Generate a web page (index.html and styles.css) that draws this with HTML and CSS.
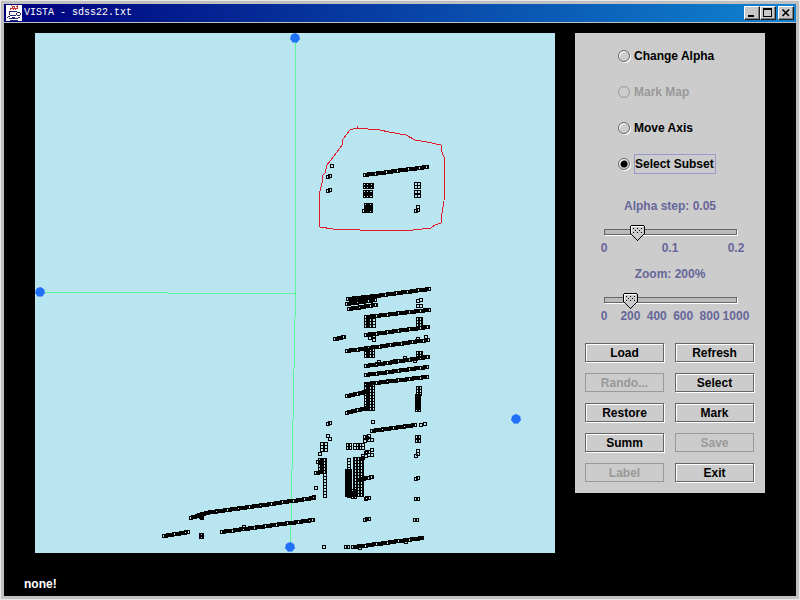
FILE: index.html
```html
<!DOCTYPE html>
<html lang="en">
<head>
<meta charset="utf-8">
<title>VISTA - sdss22.txt</title>
<link rel="stylesheet" href="styles.css">
</head>
<body>
<div class="window">
  <header class="titlebar">
    <svg class="app-icon" viewBox="0 0 16 16" aria-hidden="true" shape-rendering="crispEdges">
      <rect width="16" height="16" fill="#fff"/>
      <g fill="none" stroke="#c33">
        <path d="M4.5 5V3.5H6.5V1.5H8M7.5 5V3.5H8.5V1M9.5 5V3.5H11.5V1.5H10M5 .5H6M11 .5H12"/>
      </g>
      <g fill="none" stroke="#22226e">
        <path d="M3 6.5H11M2.5 7.5H4M11 7.5H14M3.5 8V10M10.5 8V10M14.5 8V9.5M11 10.5H14M4 10.5H10M2 11.5H4M1.5 12V13M3 13.5H12M12 12.5H14M4 15.5H12M6 12.5H9"/>
      </g>
    </svg>
    <h1 class="title">VISTA - sdss22.txt</h1>
    <div class="window-buttons">
      <button class="win-btn" type="button" aria-label="Minimize">
        <svg class="win-glyph" viewBox="0 0 12 10" shape-rendering="crispEdges"><path d="M2 8H8" stroke="#000" stroke-width="2"/></svg>
      </button>
      <button class="win-btn" type="button" aria-label="Maximize">
        <svg class="win-glyph" viewBox="0 0 12 10" shape-rendering="crispEdges"><path d="M1.5 1V8.5H9.5V1" fill="none" stroke="#000"/><path d="M1 1H10" stroke="#000" stroke-width="2"/></svg>
      </button>
      <button class="win-btn win-close" type="button" aria-label="Close">
        <svg class="win-glyph" viewBox="0 0 12 10"><path d="M2.5 1.5L9 8M9 1.5L2.5 8" stroke="#000" stroke-width="1.6"/></svg>
      </button>
    </div>
  </header>

  <main class="workspace">
    <svg class="plot" viewBox="35 33 520 520" role="img" aria-label="Star coordinates plot">
      <path class="axis" d="M295.5 38V293M40 292.5L295 293.5M295.5 293L290.5 547"/>
      <g class="handle">
        <circle cx="295" cy="38" r="4.5"/>
        <circle cx="40" cy="292" r="4.5"/>
        <circle cx="516" cy="419" r="4.5"/>
        <circle cx="290" cy="547" r="4.5"/>
      </g>
      <path class="points" id="points"/>
      <path class="lasso" d="M357 126V129M350 130L356 128L380 130L389 132L406 135L415 140L427 142L441 145L442 152L445 160L444 201L442 213L441 223L435 225L431 228L413 230H360L333 229L320 227L319 226V195L322 183L323 175L325 173L327 165L337 152L342 145L343 139L350 130"/>
    </svg>

    <form class="panel">
      <div class="modes">
        <label class="mode"><input class="radio" type="radio" name="mode"><span class="mode-text">Change Alpha</span></label>
        <label class="mode mode-off"><input class="radio" type="radio" name="mode" disabled><span class="mode-text">Mark Map</span></label>
        <label class="mode"><input class="radio" type="radio" name="mode"><span class="mode-text">Move Axis</span></label>
        <label class="mode"><input class="radio" type="radio" name="mode" checked><span class="mode-text mode-focus">Select Subset</span></label>
      </div>

      <div class="setting">
        <label class="setting-name" for="alpha">Alpha step: 0.05</label>
        <input class="slider" id="alpha" type="range" min="0" max="0.2" step="0.01" value="0.05">
        <div class="ticks"><span class="tick">0</span><span class="tick">0.1</span><span class="tick">0.2</span></div>
      </div>
      <div class="setting">
        <label class="setting-name" for="zoom">Zoom: 200%</label>
        <input class="slider" id="zoom" type="range" min="0" max="1000" step="10" value="200">
        <div class="ticks"><span class="tick">0</span><span class="tick">200</span><span class="tick">400</span><span class="tick">600</span><span class="tick">800</span><span class="tick">1000</span></div>
      </div>

      <div class="actions">
        <button class="btn" type="button">Load</button>
        <button class="btn" type="button">Refresh</button>
        <button class="btn" type="button" disabled>Rando...</button>
        <button class="btn" type="button">Select</button>
        <button class="btn" type="button">Restore</button>
        <button class="btn" type="button">Mark</button>
        <button class="btn" type="button">Summ</button>
        <button class="btn" type="button" disabled>Save</button>
        <button class="btn" type="button" disabled>Label</button>
        <button class="btn" type="button">Exit</button>
      </div>
    </form>
  </main>

  <footer class="status">none!</footer>
</div>
<script src="plot.js"></script>
</body>
</html>
```

FILE: styles.css
```css
* { box-sizing: border-box; }

body {
  margin: 0;
  font: bold 12px/14px "Liberation Sans", Arial, sans-serif;
  color: #000;
}

.window {
  display: flex;
  flex-direction: column;
  min-height: 100vh;
  background: #000;
  border: 4px solid #c0c0c0;
  outline: 1px solid #e8e8e8;
  outline-offset: -1px;
}

.titlebar {
  display: flex;
  align-items: center;
  height: 19px;
  padding: 0 2px;
  background: linear-gradient(90deg, #00007c, #1084d0);
  border-bottom: 1px solid #c0c0c0;
}

.app-icon { width: 16px; height: 16px; flex: none; }

.title {
  flex: 1;
  margin: 0 0 0 2px;
  font: 10px/16px "Liberation Mono", monospace;
  color: #fff;
}

.window-buttons { display: flex; }

.win-btn {
  display: block;
  width: 16px;
  height: 14px;
  padding: 0;
  background: #c8c8c8;
  border: 1px solid;
  border-color: #fff #202020 #202020 #fff;
  box-shadow: inset -1px -1px 0 #808080;
}

.win-close { margin-left: 2px; }

.win-glyph { display: block; width: 12px; height: 10px; margin-left: 1px; }

.workspace {
  display: grid;
  grid-template-columns: minmax(0, 1fr) 190px;
  gap: 20px;
  align-items: start;
  padding: 10px 31px 0;
}

.plot {
  display: block;
  width: 100%;
  background: #b9e5f1;
}

.axis { fill: none; stroke: #5cf596; shape-rendering: crispEdges; }
.handle { fill: #2070f8; stroke: #2070f8; stroke-dasharray: 2 2; }
.points { fill: none; stroke: #000; shape-rendering: crispEdges; }
.lasso { fill: none; stroke: #e01828; shape-rendering: crispEdges; }

.panel {
  padding: 5px 10px 10px;
  background: #ccc;
}

.modes { padding-left: 33px; }

.mode {
  display: flex;
  align-items: center;
  height: 36px;
}

.mode-off { color: #999; }

.radio {
  appearance: none;
  flex: none;
  width: 12px;
  height: 12px;
  margin: 0 4px 0 0;
  border: 1px solid #666;
  border-radius: 50%;
  box-shadow: 1px 1px 0 #fff, inset 1px 1px 0 #fff;
}

.radio:disabled { border-color: #999; box-shadow: none; }

.radio:checked {
  background: radial-gradient(circle, #000 3px, transparent 4px);
}

.mode-text { padding: 2px 1px 2px 0; border: 1px solid transparent; border-left-width: 0; }
.mode-focus { border-color: #99c; border-left-width: 1px; }

.setting {
  display: flex;
  flex-direction: column;
  align-items: center;
  padding-bottom: 10px;
  color: #669;
}

.modes + .setting { margin-top: 15px; }

.setting-name { margin-bottom: 10px; line-height: 18px; }

.slider {
  appearance: none;
  width: 147px;
  height: 16px;
  margin: 0;
  background:
    linear-gradient(#bbb, #bbb) 8px 5px / calc(100% - 16px) 4px no-repeat,
    linear-gradient(#666, #666) 7px 4px / calc(100% - 14px) 6px no-repeat,
    linear-gradient(#fff, #fff) 8px 5px / calc(100% - 14px) 6px no-repeat;
}

.slider::-webkit-slider-thumb {
  appearance: none;
  width: 15px;
  height: 16px;
  background: url("data:image/svg+xml,%3Csvg xmlns='http://www.w3.org/2000/svg' width='15' height='16' shape-rendering='crispEdges'%3E%3Cpath d='M1.5.5H13.5L14.5 1.5V8.5L7.5 15.5L.5 8.5V1.5Z' fill='%23ccc' stroke='%23000'/%3E%3Cpath d='M1.5 8V1.5H13' fill='none' stroke='%23fff'/%3E%3Cpath d='M3 3.5H12M3 7.5H12' stroke='%23000' stroke-dasharray='1 3'/%3E%3Cpath d='M5 5.5H11' stroke='%23000' stroke-dasharray='1 3'/%3E%3C/svg%3E") no-repeat;
}

.ticks {
  display: flex;
  justify-content: space-between;
  width: 158px;
}

.tick {
  display: flex;
  justify-content: center;
  width: 26px;
}

.actions {
  display: grid;
  grid-template-columns: 1fr 1fr;
  gap: 11px;
  padding: 0 1px 1px 0;
  margin-top: 10px;
}

.btn {
  height: 19px;
  padding: 0;
  font: inherit;
  color: #000;
  background: #ccc;
  border: 1px solid #666;
  box-shadow: 1px 1px 0 #fff, inset 1px 1px 0 #fff;
}

.btn:disabled {
  color: #999;
  border-color: #999;
  box-shadow: none;
}

.status {
  margin-top: auto;
  padding: 0 20px 5px;
  color: #fff;
}
```

FILE: plot.js
```js
// Strings of records: [x1, y1, x2, y2], drawn as overlapping squares.
const runs = [
  [365, 175, 427, 167],
  [348, 299, 376, 296], [353, 299, 429, 289], [347, 304, 375, 300], [349, 309, 376, 305],
  [366, 317, 429, 310], [335, 339, 344, 337], [366, 335, 428, 327],
  [347, 351, 428, 340], [366, 366, 428, 357], [366, 375, 427, 367], [366, 384, 427, 377],
  [347, 396, 366, 392], [347, 413, 366, 408], [372, 431, 415, 425], [358, 480, 372, 477],
  [355, 547, 422, 538], [191, 518, 206, 513], [206, 513, 314, 498],
  [164, 536, 188, 532], [222, 532, 313, 520]
];

// Dense groups: [list of x, first y, last y, step in y].
const blocks = [
  [[365, 367, 368, 371, 372], 185, 188, 2], [[365, 367, 371], 192, 196, 2], [[366, 368, 370, 371], 205, 211, 2],
  [[416, 419], 184, 187, 3], [[416, 419], 192, 196, 4],
  [[366, 368, 370, 371, 374], 317, 326, 3], [[418, 420, 421], 319, 327, 3],
  [[366, 368, 370, 371, 373], 350, 357, 3], [[418, 420, 421], 353, 358, 3],
  [[366, 368, 370, 371, 373], 385, 410, 3], [[418, 420], 388, 394, 3], [[417, 419], 396, 410, 2],
  [[322, 326], 444, 450, 3], [[320, 322, 324], 460, 474, 3], [[325], 460, 497, 3],
  [[348, 350], 445, 450, 3], [[349], 460, 497, 3], [[347, 348, 350], 471, 497, 3],
  [[355, 358, 360, 363], 445, 450, 3], [[355, 356], 459, 496, 3], [[359, 361, 362], 459, 496, 3],
  [[353, 355], 491, 497, 2], [[417, 419], 437, 441, 4]
];

// Separate records.
const singles = [
  [332, 166], [328, 177], [330, 176], [328, 191], [330, 190], [364, 211],
  [418, 207], [416, 211], [418, 210],
  [418, 301], [421, 300], [418, 306], [421, 306], [370, 338], [374, 340], [374, 336],
  [418, 339], [426, 337], [379, 362], [395, 361], [405, 358], [415, 361],
  [328, 424], [330, 423], [373, 422], [421, 425], [425, 424], [328, 436], [330, 439],
  [320, 454], [318, 462], [316, 473], [318, 473], [316, 488], [314, 497],
  [365, 437], [367, 438], [369, 436], [365, 441], [369, 440], [372, 440],
  [366, 453], [367, 452], [369, 452], [372, 450], [366, 456], [369, 455], [372, 455], [363, 458], [363, 456],
  [366, 499], [367, 498], [369, 498], [365, 520], [367, 519], [369, 519],
  [418, 451], [418, 454], [416, 456], [416, 479], [418, 478],
  [416, 499], [418, 499], [415, 520], [417, 520],
  [324, 547], [346, 547], [348, 547], [353, 547], [406, 542], [360, 548],
  [202, 516], [202, 518], [201, 517], [201, 535], [202, 535], [201, 537], [202, 537], [244, 527]
];

const square = (x, y) => `M${x - 1.5} ${y - 1.5}h3v3h-3z`;
const parts = singles.map(([x, y]) => square(x, y));

for (const [x1, y1, x2, y2] of runs) {
  const steps = [2, 2, 2, 2, 2, 1];
  for (let x = x1, i = 0; x <= x2; x += steps[i++ % steps.length]) {
    parts.push(square(x, Math.round(y1 + (y2 - y1) * (x - x1) / (x2 - x1))));
  }
  parts.push(square(x2, y2));
}

for (const [columns, top, bottom, step] of blocks) {
  for (const x of columns) {
    for (let y = top; y <= bottom; y += step) parts.push(square(x, y));
  }
}

document.getElementById("points").setAttribute("d", parts.join(""));
```
